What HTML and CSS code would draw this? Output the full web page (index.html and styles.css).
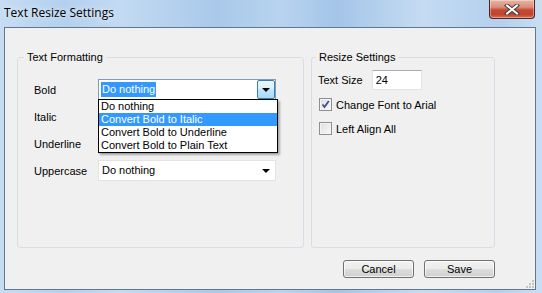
FILE: index.html
```html
<!DOCTYPE html>
<html lang="en">
  <head>
    <meta charset="UTF-8" />
    <title>Text Resize Settings</title>
    <link rel="stylesheet" href="styles.css">
  </head>
  <body>
    <div class="window">
      <div class="titlebar">
        <span class="titlebar__text">Text Resize Settings</span>
        <button class="titlebar__close" aria-label="Close">
          <svg viewBox="0 0 16 11" class="titlebar__close-icon">
            <path d="M3 1.5L13 9.5M13 1.5L3 9.5" stroke="#3b3b3b" stroke-width="4" stroke-linecap="square" />
            <path d="M3 1.5L13 9.5M13 1.5L3 9.5" stroke="#fff" stroke-width="2" stroke-linecap="square" />
          </svg>
        </button>
      </div>

      <div class="client">
        <div class="groups">
          <fieldset class="group group--format">
            <legend class="group__title">Text Formatting</legend>
            <div class="fields">
              <label class="fields__label">Bold</label>
              <div class="combo combo--open">
                <span class="combo__value is-selected">Do nothing</span>
                <span class="combo__button"><span class="arrow"></span></span>
                <ul class="combo__list">
                  <li class="combo__item">Do nothing</li>
                  <li class="combo__item is-hover">Convert Bold to Italic</li>
                  <li class="combo__item">Convert Bold to Underline</li>
                  <li class="combo__item">Convert Bold to Plain Text</li>
                </ul>
              </div>

              <!-- these two sit under the open list -->
              <label class="fields__label">Italic</label>
              <div class="combo"><span class="arrow"></span></div>

              <label class="fields__label">Underline</label>
              <div class="combo"><span class="arrow"></span></div>

              <label class="fields__label">Uppercase</label>
              <div class="combo">
                <span class="combo__value">Do nothing</span>
                <span class="arrow"></span>
              </div>
            </div>
          </fieldset>

          <fieldset class="group group--resize">
            <legend class="group__title">Resize Settings</legend>
            <div class="resize">
              <div class="size-row">
                <label class="size-row__label">Text Size</label>
                <span class="textbox">24</span>
              </div>
              <label class="check">
                <span class="check__box">
                  <svg viewBox="0 0 9 9" class="check__mark">
                    <path d="M1.5 4.5L3.5 7L7.8 1" fill="none" stroke="#3d4f8f" stroke-width="1.8" />
                  </svg>
                </span>
                Change Font to Arial
              </label>
              <label class="check">
                <span class="check__box"></span>
                Left Align All
              </label>
            </div>
          </fieldset>
        </div>

        <div class="actions">
          <button class="action">Cancel</button>
          <button class="action">Save</button>
        </div>

        <svg class="grip" viewBox="0 0 10 10">
          <rect x="8" y="2" width="2" height="2" fill="#c4c4c4" />
          <rect x="5" y="5" width="2" height="2" fill="#c4c4c4" />
          <rect x="8" y="5" width="2" height="2" fill="#c4c4c4" />
          <rect x="2" y="8" width="2" height="2" fill="#c4c4c4" />
          <rect x="5" y="8" width="2" height="2" fill="#c4c4c4" />
          <rect x="8" y="8" width="2" height="2" fill="#c4c4c4" />
        </svg>
      </div>
    </div>
  </body>
</html>
```

FILE: styles.css
```css
* {
  margin: 0;
  padding: 0;
  box-sizing: border-box;
}
body {
  font-family: "Liberation Sans", Arial, sans-serif;
  font-size: 11px;
  color: #000;
  background: #fff;
}
.window {
  width: 542px;
  height: 293px;
  background: linear-gradient(90deg, #c6ddf3 0%, #b3d0ee 12%, #c3daf2 22%, #a9c9ea 40%, #b8d3ef 52%, #a4c5e8 62%, #c5dbf2 78%, #b4d0ee 92%, #c9def3 100%);
  display: flex;
  flex-direction: column;
}
.titlebar {
  height: 27px;
  display: flex;
  align-items: flex-start;
}
.titlebar__text {
  font-family: "Open Sans", "Noto Sans", sans-serif;
  font-size: 12px;
  line-height: 16px;
  padding: 5px 0 0 4px;
  color: #000;
  text-shadow: 0 0 6px rgba(255, 255, 255, 0.9);
}
.titlebar__close {
  margin-left: auto;
  margin-right: 7px;
  width: 46px;
  height: 19px;
  border: 1px solid #5a2219;
  border-top: none;
  border-radius: 0 0 4px 4px;
  background: linear-gradient(#eab3a5 0%, #d98d78 40%, #c64a32 55%, #c0432d 80%, #d2725c 100%);
  box-shadow: inset 0 0 0 1px rgba(255, 255, 255, 0.35);
  display: grid;
  place-items: center;
}
.titlebar__close-icon {
  width: 16px;
  height: 11px;
}
.client {
  position: relative;
  margin-left: 4px;
  width: 532px;
  height: 263px;
  border: 1px solid #62778d;
  background-color: #f0f0f0;
  padding: 23px 40px 0 12px;
}
.groups {
  display: flex;
  gap: 7px;
  height: 197px;
}
.group {
  border: 1px solid #d5dfe5;
  border-radius: 3px;
  min-width: 0;
}
.group--format {
  flex: 0 0 287px;
}
.group--resize {
  flex: 1;
}
.group__title {
  margin-left: 6px;
  padding: 0 3px;
  line-height: 13px;
}
.group--resize .group__title {
  margin-left: 4px;
}
.fields {
  display: grid;
  grid-template-columns: 64px 178px;
  grid-auto-rows: 21px;
  row-gap: 6px;
  align-items: center;
  padding: 15px 0 0 16px;
}
.combo {
  position: relative;
  height: 21px;
  background: #fff;
  border: 1px solid #e3e3e3;
  display: flex;
  align-items: center;
  padding-left: 2px;
}
.combo--open {
  border-color: #7f9db9;
  z-index: 2;
}
.combo__value {
  line-height: 15px;
  padding: 0 1px;
}
.combo__value.is-selected {
  background-color: #3399ff;
  color: #fff;
}
.combo .arrow {
  margin-left: auto;
  margin-right: 5px;
}
.combo__button {
  margin-left: auto;
  width: 18px;
  height: 19px;
  border: 1px solid #3c7fb1;
  border-radius: 2px;
  background: linear-gradient(#eaf6fd 0%, #d9f0fc 45%, #bee6fd 50%, #a7d9f5 100%);
  display: grid;
  place-items: center;
}
.combo__button .arrow {
  margin: 0;
}
.arrow {
  width: 0;
  height: 0;
  border-left: 4px solid transparent;
  border-right: 4px solid transparent;
  border-top: 4px solid #000;
}
.combo__list {
  list-style: none;
  position: absolute;
  top: 100%;
  left: -1px;
  width: 180px;
  background: #fff;
  border: 1px solid #000;
  box-shadow: 2px 2px 2px rgba(0, 0, 0, 0.3);
}
.combo__item {
  line-height: 13px;
  padding-left: 2px;
}
.combo__item.is-hover {
  background-color: #3399ff;
  color: #fff;
}
.resize {
  padding: 6px 0 0 6px;
}
.size-row {
  display: flex;
  align-items: center;
  gap: 9px;
}
.textbox {
  width: 50px;
  height: 20px;
  border: 1px solid #e3e3e3;
  border-top-color: #abadb3;
  background: #fff;
  line-height: 18px;
  padding-left: 3px;
}
.check {
  display: flex;
  align-items: center;
  gap: 4px;
  height: 13px;
  margin-top: 11px;
  padding-left: 1px;
}
.size-row + .check {
  margin-top: 8px;
}
.check__box {
  width: 13px;
  height: 13px;
  border: 1px solid #8e8f8f;
  background: linear-gradient(135deg, #dcdcdc, #fbfbfb);
  box-shadow: inset 0 0 0 1px #f4f4f4;
  display: grid;
  place-items: center;
}
.check__mark {
  width: 9px;
  height: 9px;
}
.actions {
  display: flex;
  justify-content: flex-end;
  gap: 10px;
  margin-top: 12px;
}
.action {
  width: 71px;
  height: 18px;
  border: 1px solid #707070;
  border-radius: 3px;
  background: linear-gradient(#f2f2f2 0%, #ebebeb 48%, #dddddd 52%, #cfcfcf 100%);
  box-shadow: inset 0 0 0 1px rgba(255, 255, 255, 0.7);
  font-family: "Liberation Sans", Arial, sans-serif;
  font-size: 11px;
  color: #000;
}
.grip {
  position: absolute;
  right: 1px;
  bottom: 1px;
  width: 10px;
  height: 10px;
}
```
